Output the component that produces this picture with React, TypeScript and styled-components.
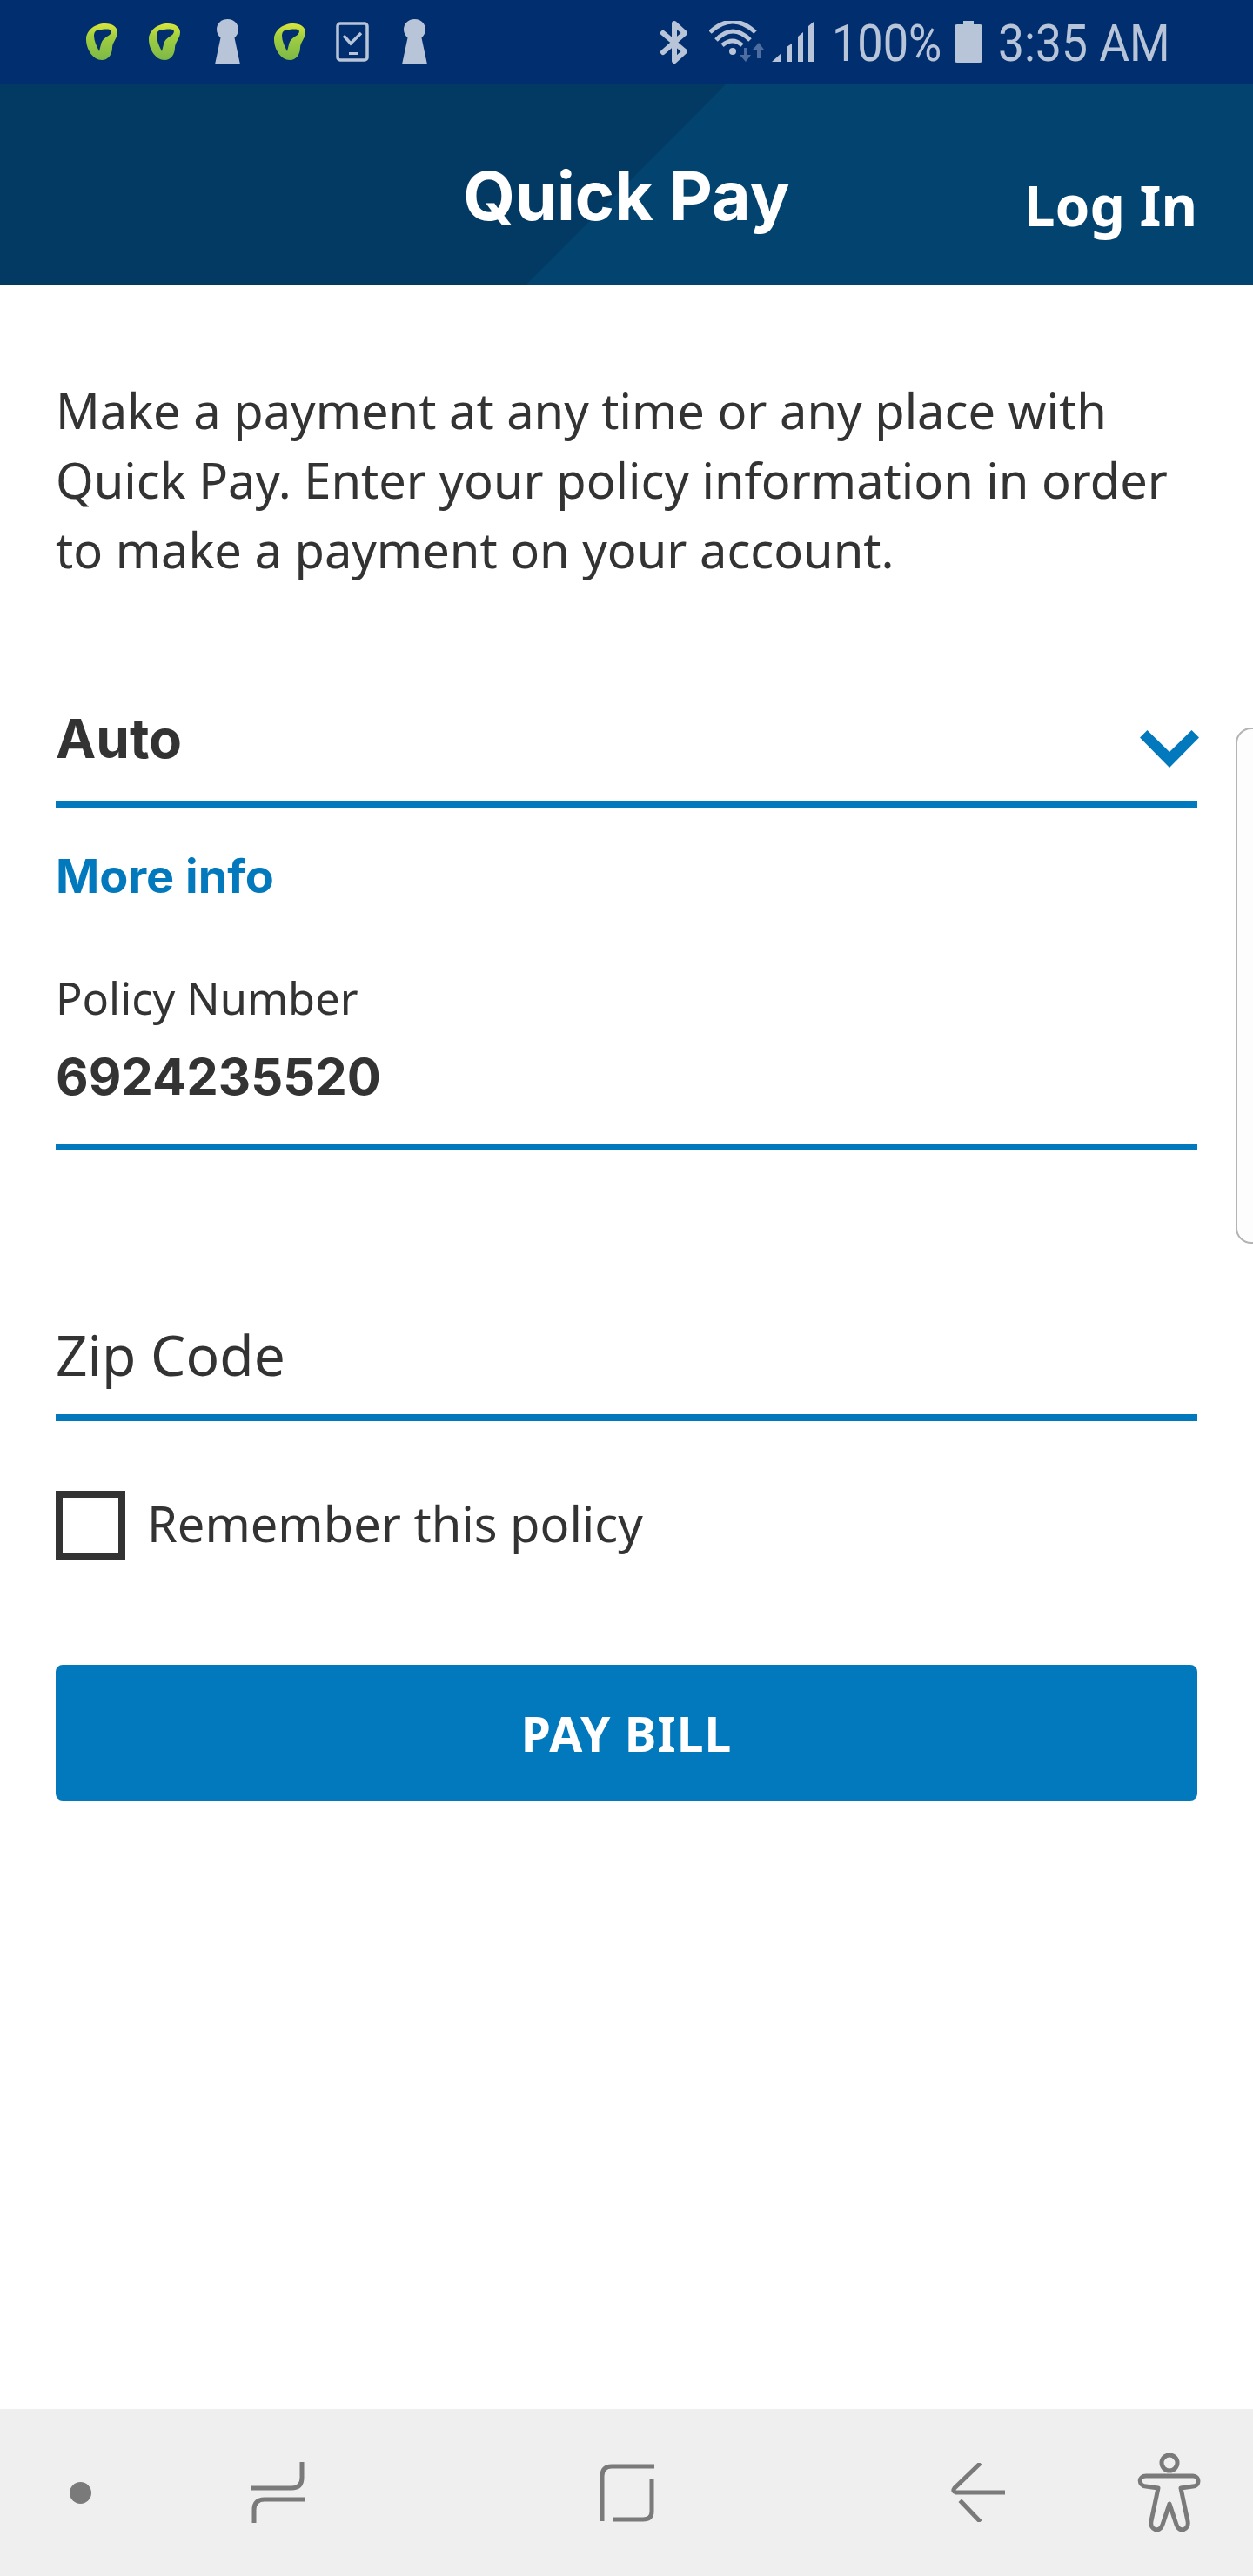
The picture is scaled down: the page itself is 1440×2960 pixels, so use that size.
import React from 'react';
import styled, { createGlobalStyle } from 'styled-components';

const GlobalStyle = createGlobalStyle`
  html, body { margin: 0; padding: 0; background: #ffffff; }
  * { box-sizing: border-box; }
`;

const Screen = styled.div`
  position: relative;
  width: 1440px;
  height: 2960px;
  display: flex;
  flex-direction: column;
  overflow: hidden;
  font-family: "Noto Sans", "Open Sans", sans-serif;
  color: #333333;
`;

const StatusBar = styled.div`
  height: 96px;
  flex: none;
  background: #002e6e;
  display: flex;
  align-items: center;
  justify-content: space-between;
  padding: 0 100px 0 99px;
`;

const StatusGroup = styled.div`
  display: flex;
  align-items: center;
`;

const StatusIcon = styled.svg<{ $left?: number }>`
  display: block;
  flex: none;
  margin-left: ${p => p.$left ?? 0}px;
`;

const StatusText = styled.span<{ $width: number; $left: number; $squeeze: number }>`
  display: block;
  width: ${p => p.$width}px;
  margin-left: ${p => p.$left}px;
  padding-top: 4px;
  font-family: Roboto, sans-serif;
  font-size: 60px;
  line-height: 60px;
  color: #b8c4d8;
  white-space: nowrap;
  transform: scaleX(${p => p.$squeeze});
  transform-origin: left center;
`;

const Header = styled.header`
  position: relative;
  height: 232px;
  flex: none;
  background: #02446f;
  display: flex;
  align-items: center;
  justify-content: center;
  overflow: hidden;
`;

const HeaderShade = styled.div`
  position: absolute;
  inset: 0;
  background: #033a63;
  clip-path: polygon(0 0, 835px 0, 604px 100%, 0 100%);
`;

const Title = styled.h1`
  position: relative;
  margin: 26px 0 0;
  font-family: Inter, sans-serif;
  font-weight: 700;
  font-size: 77px;
  line-height: 100px;
  color: #ffffff;
`;

const LogIn = styled.a`
  position: absolute;
  right: 64px;
  top: 106px;
  font-weight: 700;
  font-size: 64px;
  line-height: 68px;
  color: #ffffff;
`;

const Main = styled.main`
  flex: 1;
  padding: 103px 64px 0;
`;

const Intro = styled.p`
  margin: 0;
  font-size: 56px;
  line-height: 80px;
`;

const SelectRow = styled.div`
  margin-top: 137px;
  height: 120px;
  display: flex;
  align-items: center;
  justify-content: space-between;
  border-bottom: 8px solid #0279bd;
`;

const SelectValue = styled.span`
  margin-bottom: 30px;
  font-family: Inter, sans-serif;
  font-weight: 700;
  font-size: 62px;
  line-height: 76px;
  color: #333333;
`;

const Chevron = styled.svg`
  display: block;
  margin: 0 -2px 7px 0;
`;

const MoreInfo = styled.a`
  display: block;
  margin-top: 44px;
  font-family: Inter, sans-serif;
  font-weight: 700;
  font-size: 54px;
  line-height: 70px;
  color: #0279bd;
`;

const Field = styled.div`
  margin-top: 70px;
  height: 210px;
  border-bottom: 8px solid #0279bd;
`;

const FieldLabel = styled.div`
  font-size: 50.500px;
  line-height: 70px;
`;

const FieldValue = styled.div`
  margin-top: 17px;
  font-family: Inter, sans-serif;
  font-weight: 700;
  font-size: 58px;
  line-height: 76px;
`;

const ZipField = styled.div`
  margin-top: 195px;
  height: 116px;
  border-bottom: 8px solid #0279bd;
  font-size: 64px;
  line-height: 80px;
  color: #333333;
`;

const RememberRow = styled.label`
  margin-top: 80px;
  display: flex;
  align-items: center;
  gap: 25px;
  font-size: 56px;
  line-height: 80px;
`;

const RememberText = styled.span`
  margin-top: -6px;
`;

const Checkbox = styled.span`
  display: block;
  flex: none;
  width: 80px;
  height: 80px;
  border: 8px solid #333333;
`;

const PayButton = styled.button`
  display: block;
  width: 100%;
  height: 156px;
  margin-top: 120px;
  border: 0;
  border-radius: 8px;
  background: #0279bd;
  color: #ffffff;
  font-family: "Noto Sans", sans-serif;
  font-weight: 700;
  font-size: 55px;
  letter-spacing: 1px;
`;

const EdgeHandle = styled.div`
  position: absolute;
  left: 1420px;
  top: 836px;
  width: 40px;
  height: 593px;
  border: 2px solid #b4b4b4;
  border-radius: 18px;
  background: #fdfdfd;
`;

const BottomNav = styled.nav`
  height: 192px;
  flex: none;
  background: #efefef;
  display: grid;
  grid-template-columns: 209px 400px 404px 214px auto;
  align-items: center;
  padding-left: 80px;
`;

const NavIcon = styled.svg`
  display: block;
  fill: none;
  stroke: #7a7a7a;
  stroke-width: 5;
`;

const Leaf = ({ left, id }: { left?: number; id: string }) => (
  <StatusIcon $left={left} width="36" height="42" viewBox="0 0 36 42">
    <defs>
      <linearGradient id={id} x1="0.5" y1="0" x2="0.5" y2="1">
        <stop offset="0" stopColor="#dbe63c" />
        <stop offset="0.35" stopColor="#a2cf3f" />
        <stop offset="1" stopColor="#7cb848" />
      </linearGradient>
    </defs>
    <path
      fillRule="evenodd"
      fill={`url(#${id})`}
      d="M22 0C30 0 36 4 36 10C36 17 31 20 30 27C30 35 26 42 18 42C8 42 0 30 0 18C0 8 10 0 22 0ZM12 8C17 7 24 6 27 7C30 8 29 11 27 13C22 16 18 19 17 24L15 32C12 26 9 20 9 14C9 11 10 9 12 8Z"
    />
  </StatusIcon>
);

const Keyhole = ({ left }: { left?: number }) => (
  <StatusIcon $left={left} width="29" height="52" viewBox="0 0 29 52">
    <path fill="#b8c4d8" d="M14.5 0C22.5 0 27 6 27 12C27 16 25 19 22.5 21.5L29 52H0L6.5 21.5C4 19 2 16 2 12C2 6 6.500 0 14.5 0Z" />
  </StatusIcon>
);

const App: React.FC = () => {
  return (
    <Screen>
      <GlobalStyle />
      <StatusBar>
        <StatusGroup>
          <Leaf id="leafA" />
          <Leaf id="leafB" left={36} />
          <Keyhole left={40} />
          <Leaf id="leafC" left={39} />
          <StatusIcon $left={35} width="38" height="46" viewBox="0 0 38 46">
            <rect x="2" y="2" width="34" height="42" rx="3" fill="none" stroke="#b8c4d8" strokeWidth="3.5" />
            <path d="M9 16L17 25L29 13" fill="none" stroke="#b8c4d8" strokeWidth="3.5" />
            <rect x="15" y="35" width="10" height="3" fill="#b8c4d8" />
          </StatusIcon>
          <Keyhole left={38} />
        </StatusGroup>
        <StatusGroup>
          <StatusIcon width="31" height="49" viewBox="0 0 31 49">
            <path d="M3 14L28 35L16 46V3L28 14L3 36" fill="none" stroke="#b8c4d8" strokeWidth="6" strokeLinejoin="round" strokeLinecap="round" />
          </StatusIcon>
          <StatusIcon $left={25} width="64" height="48" viewBox="0 0 64 48">
            <path d="M1 13Q27 -11 53 13M8 22Q27 2 47 22M15 28Q27 18 38 28" fill="none" stroke="#b8c4d8" strokeWidth="5" />
            <circle cx="27" cy="35" r="4" fill="#b8c4d8" />
            <path d="M40 31H44V39H48L42 47L35 39H40Z" fill="#4f6d9f" />
            <path d="M55 43H59V33H63L57 25L50 33H55Z" fill="#4f6d9f" />
          </StatusIcon>
          <StatusIcon $left={8} width="48" height="48" viewBox="0 0 48 48">
            <path fill="#b8c4d8" d="M0 47L11 37V47ZM17 30L23 26V47H17ZM30 18L36 13V47H30ZM42 6L48 1V47H42Z" />
          </StatusIcon>
          <StatusText $width={123} $left={21} $squeeze={0.87}>100%</StatusText>
          <StatusIcon $left={18} width="32" height="48" viewBox="0 0 32 48">
            <path fill="#b8c4d8" d="M10 0H22V4H29C31 4 32 5 32 7V45C32 47 31 48 29 48H3C1 48 0 47 0 45V7C0 5 1 4 3 4H10Z" />
          </StatusIcon>
          <StatusText $width={193} $left={18} $squeeze={0.89}>3:35 AM</StatusText>
        </StatusGroup>
      </StatusBar>
      <Header>
        <HeaderShade />
        <Title>Quick Pay</Title>
        <LogIn>Log In</LogIn>
      </Header>
      <Main>
        <Intro>
          Make a payment at any time or any place with
          <br />
          Quick Pay. Enter your policy information in order
          <br />
          to make a payment on your account.
        </Intro>
        <SelectRow>
          <SelectValue>Auto</SelectValue>
          <Chevron width="68" height="43" viewBox="0 0 68 43">
            <path d="M8.500 0L34 25L59.500 0L68 8.500L34 43L0 8.500Z" fill="#0279bd" />
          </Chevron>
        </SelectRow>
        <MoreInfo>More info</MoreInfo>
        <Field>
          <FieldLabel>Policy Number</FieldLabel>
          <FieldValue>6924235520</FieldValue>
        </Field>
        <ZipField>Zip Code</ZipField>
        <RememberRow>
          <Checkbox />
          <RememberText>Remember this policy</RememberText>
        </RememberRow>
        <PayButton>PAY BILL</PayButton>
      </Main>
      <EdgeHandle />
      <BottomNav>
        <NavIcon width="25" height="25" viewBox="0 0 25 25">
          <circle cx="12.500" cy="12.500" r="12.500" fill="#7a7a7a" stroke="none" />
        </NavIcon>
        <NavIcon width="62" height="70" viewBox="0 0 62 70">
          <path d="M0 30H46Q58 30 58 18V0M61 43H15Q3 43 3 55V70" />
        </NavIcon>
        <NavIcon width="64" height="67" viewBox="0 0 64 67">
          <path d="M63 3H14Q3 3 3 14V66M60 18V55Q60 64 50 64H16" />
        </NavIcon>
        <NavIcon width="62" height="68" viewBox="0 0 62 68">
          <path d="M32 2L4 29Q1 33 6 34H62M12 45L32 66" strokeLinecap="square" />
        </NavIcon>
        <NavIcon width="74" height="90" viewBox="0 0 74 90">
          <circle cx="37" cy="11" r="9" />
          <path d="M10 26H64C72 26 72 38 64 38L50 40L58 78C60 88 48 92 45 82L37 58L29 82C26 92 14 88 16 78L24 40L10 38C1 37 1 26 10 26Z" strokeLinejoin="round" />
        </NavIcon>
      </BottomNav>
    </Screen>
  );
};

export default App;
